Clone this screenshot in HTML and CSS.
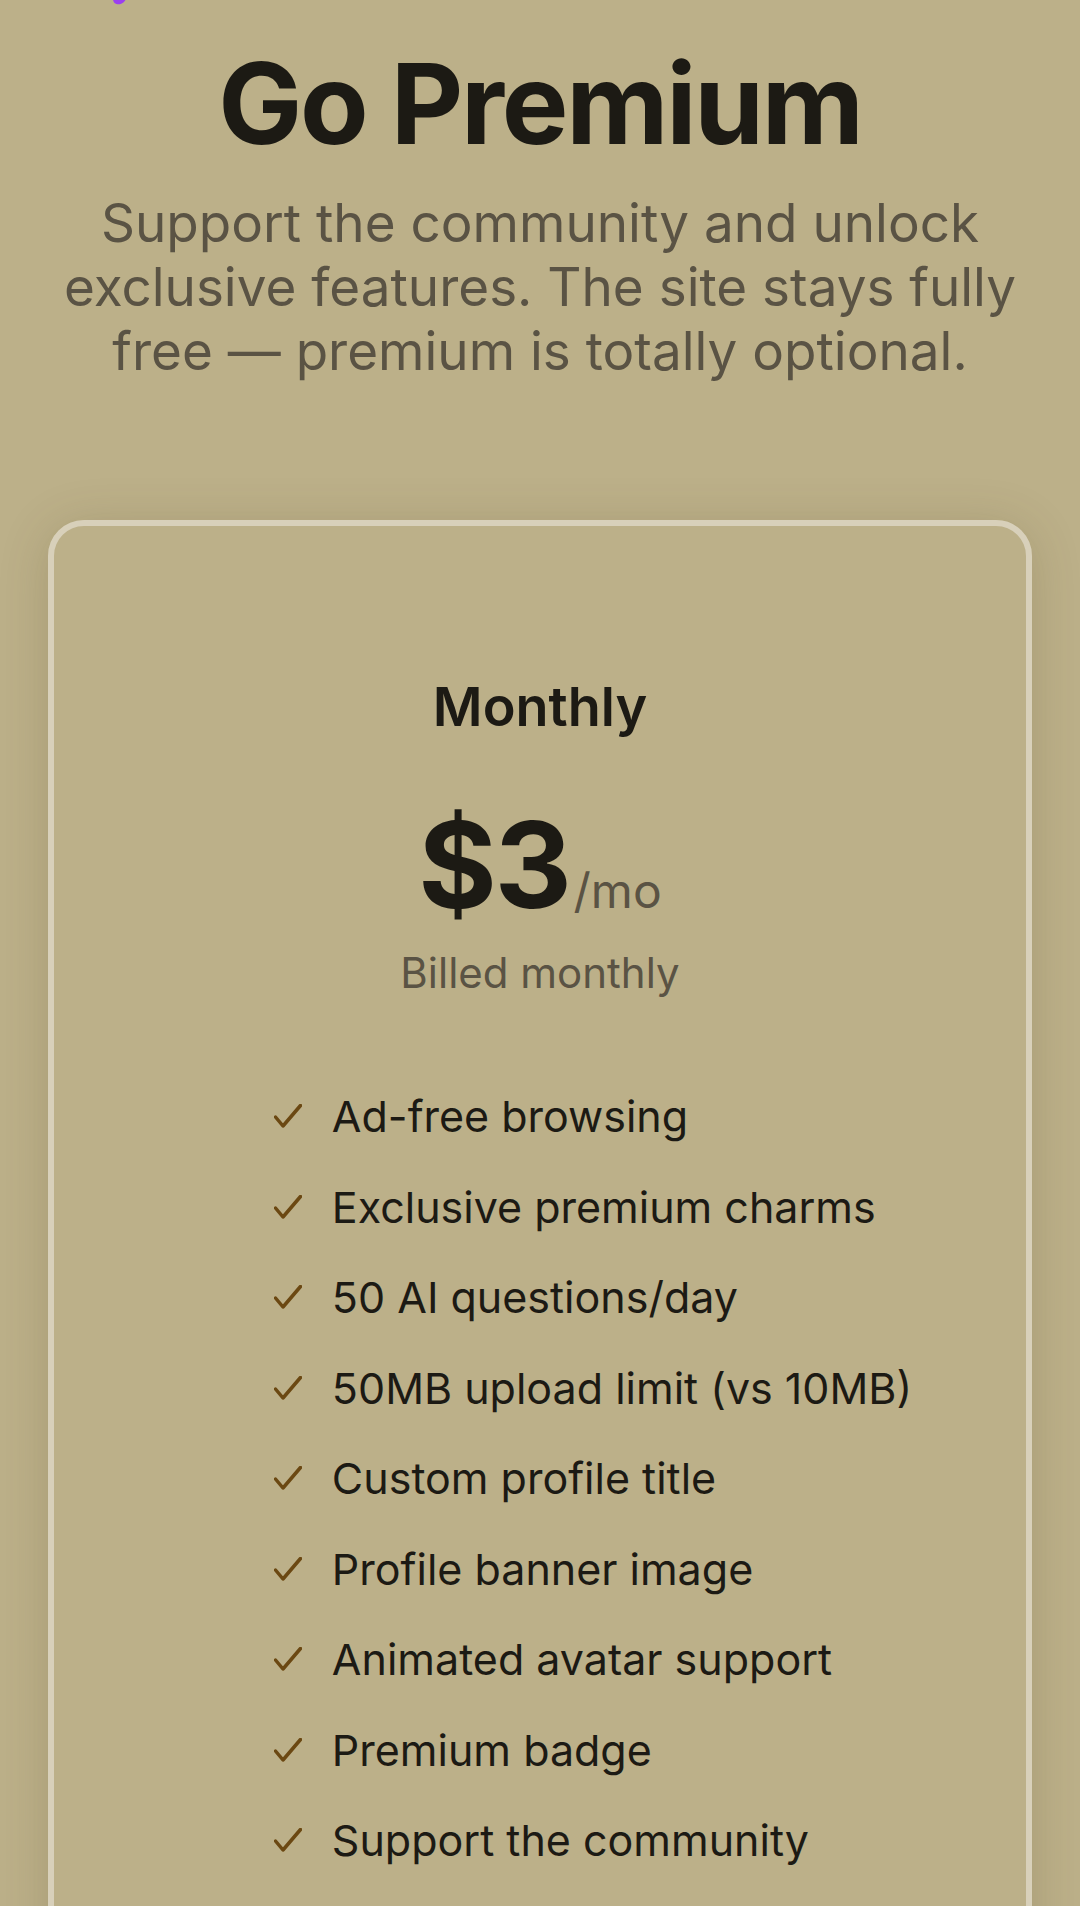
FILE: index.html
```html
<!DOCTYPE html>
<html lang="en">
<head>
    <meta charset="UTF-8">
    <meta name="viewport" content="width=device-width, initial-scale=1.0">
    <title>Go Premium</title>
    <link rel="stylesheet" href="styles.css">
</head>
<body>
    <div class="deco"></div>
    <header class="intro">
        <h1>Go Premium</h1>
        <p>Support the community and unlock exclusive features. The site stays fully free — premium is totally optional.</p>
    </header>
    <main>
        <section class="plan">
            <h2>Monthly</h2>
            <div class="price">
                <span class="amount">$3</span><span class="per">/mo</span>
            </div>
            <p class="billing">Billed monthly</p>
            <ul class="features">
                <li><svg class="check" viewBox="0 0 28 24"><polyline points="1.5,13 9,22 26.5,1.5"/></svg>Ad-free browsing</li>
                <li><svg class="check" viewBox="0 0 28 24"><polyline points="1.5,13 9,22 26.5,1.5"/></svg>Exclusive premium charms</li>
                <li><svg class="check" viewBox="0 0 28 24"><polyline points="1.5,13 9,22 26.5,1.5"/></svg>50 AI questions/day</li>
                <li><svg class="check" viewBox="0 0 28 24"><polyline points="1.5,13 9,22 26.5,1.5"/></svg>50MB upload limit (vs 10MB)</li>
                <li><svg class="check" viewBox="0 0 28 24"><polyline points="1.5,13 9,22 26.5,1.5"/></svg>Custom profile title</li>
                <li><svg class="check" viewBox="0 0 28 24"><polyline points="1.5,13 9,22 26.5,1.5"/></svg>Profile banner image</li>
                <li><svg class="check" viewBox="0 0 28 24"><polyline points="1.5,13 9,22 26.5,1.5"/></svg>Animated avatar support</li>
                <li><svg class="check" viewBox="0 0 28 24"><polyline points="1.5,13 9,22 26.5,1.5"/></svg>Premium badge</li>
                <li><svg class="check" viewBox="0 0 28 24"><polyline points="1.5,13 9,22 26.5,1.5"/></svg>Support the community</li>
            </ul>
        </section>
    </main>
</body>
</html>
```

FILE: styles.css
```css
body {
    font-family: Inter, "Noto Sans", sans-serif;
    background: #bcb089;
    color: #1c1a14;
    margin: 0;
    padding: 0 48px;
    text-align: center;
}
.deco {
    width: 13px;
    height: 10px;
    margin: -6px 0 0 65px;
    background: #9b3ff0;
    border-radius: 50%;
    transform: rotate(-20deg);
}
h1 {
    margin: 32px 0 0;
    font-size: 112px;
    line-height: 134px;
    font-weight: 700;
    letter-spacing: -0.02em;
}
.intro p {
    margin: 21px 0 0;
    font-size: 53px;
    line-height: 64px;
    color: #5a5344;
}
.plan {
    margin-top: 137px;
    padding: 146px 0 80px;
    border: 6px solid #d8d0ba;
    border-radius: 36px;
    box-shadow: 0 6px 50px rgba(80, 66, 30, 0.2);
}
h2 {
    margin: 0;
    font-size: 54px;
    line-height: 70px;
    font-weight: 600;
}
.price {
    display: flex;
    justify-content: center;
    align-items: baseline;
    margin-top: 63px;
    line-height: 1;
}
.amount {
    font-size: 120px;
    font-weight: 700;
    letter-spacing: -0.02em;
}
.per {
    font-size: 48px;
    color: #5a5344;
    margin-left: 4px;
}
.billing {
    margin: 18px 0 0;
    font-size: 42px;
    line-height: 60px;
    color: #5a5344;
}
.features {
    list-style: none;
    width: fit-content;
    margin: 77px auto 0;
    padding: 0 0 0 106px;
    text-align: left;
}
.features li {
    display: flex;
    align-items: center;
    gap: 30px;
    font-size: 43px;
    line-height: 72px;
    margin-bottom: 18.5px;
}
.check {
    width: 28px;
    height: 24px;
    flex-shrink: 0;
    fill: none;
    stroke: #6b4812;
    stroke-width: 3.5;
    stroke-linecap: round;
    stroke-linejoin: round;
}
```
